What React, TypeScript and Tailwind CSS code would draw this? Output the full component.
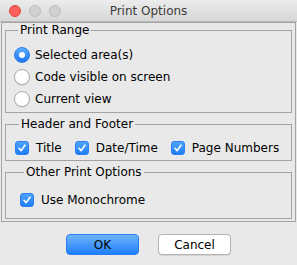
import React from 'react'

const font = { fontFamily: '"DejaVu Sans", "Liberation Sans", sans-serif' }

const Radio = ({ checked, label }: { checked?: boolean; label: string }) => (
  <label className="flex h-[22px] items-center gap-[5px]">
    {checked ? (
      <span className="flex h-[16px] w-[16px] items-center justify-center rounded-full border border-[#2f7fe8] bg-gradient-to-b from-[#5aaefc] to-[#1b74f1]">
        <span className="h-[6px] w-[6px] rounded-full bg-white" />
      </span>
    ) : (
      <span className="h-[16px] w-[16px] rounded-full border border-[#acacac] bg-white shadow-[0_1px_1px_rgba(0,0,0,0.08)]" />
    )}
    <span className="text-[12px] leading-[14px] text-black">{label}</span>
  </label>
)

const Check = ({ label }: { label: string }) => (
  <label className="flex h-[23px] items-center gap-[7px]">
    <span className="flex h-[14px] w-[14px] items-center justify-center rounded-[3px] border border-[#2c7ff0] bg-gradient-to-b from-[#4ea3fc] to-[#1d7cf6]">
      <svg width="10" height="10" viewBox="0 0 10 10" fill="none">
        <path d="M2 5.3 L4.1 7.6 L8 2.2" stroke="white" strokeWidth="1.6" strokeLinecap="round" strokeLinejoin="round" />
      </svg>
    </span>
    <span className="text-[12px] leading-[14px] text-black">{label}</span>
  </label>
)

const Group = ({ title, className, children }: { title: string; className?: string; children: React.ReactNode }) => (
  <fieldset className={`border border-[#a3a3a3] ${className ?? ''}`}>
    <legend className="ml-[4px] px-[2px] text-[12px] leading-[14px] text-black">{title}</legend>
    {children}
  </fieldset>
)

const App = () => {
  return (
    <div className="h-[265px] w-[297px] overflow-hidden bg-[#e9e9e9]" style={font}>
      {/* title bar */}
      <div className="grid h-[22px] grid-cols-[1fr_auto_1fr] items-center border-b border-[#b9b9b9] bg-gradient-to-b from-[#ececec] to-[#d7d7d7]">
        <div className="flex items-center gap-[8px] pl-[9px]">
          <span className="h-[12px] w-[12px] rounded-full border border-[#e0443e] bg-[#fc605c]" />
          <span className="h-[12px] w-[12px] rounded-full border border-[#bdbdbd] bg-[#d1d1d1]" />
          <span className="h-[12px] w-[12px] rounded-full border border-[#bdbdbd] bg-[#d1d1d1]" />
        </div>
        <div className="text-[12px] leading-[14px] text-[#3c3c3c]">Print Options</div>
        <div />
      </div>

      <div className="ml-[1px] w-[295px] border border-[#a3a3a3] px-[3px] pb-[2px]">
        <Group title="Print Range" className="pb-[2px] pl-[8px] pt-[7px]">
          <Radio checked label="Selected area(s)" />
          <Radio label="Code visible on screen" />
          <Radio label="Current view" />
        </Group>

        <Group title="Header and Footer" className="mt-[4px] pb-[1px] pl-[9px] pt-[5px]">
          <div className="flex gap-[13px]">
            <Check label="Title" />
            <Check label="Date/Time" />
            <Check label="Page Numbers" />
          </div>
        </Group>

        <Group title="Other Print Options" className="mt-[4px] pb-[7px] pl-[14px] pt-[9px]">
          <Check label="Use Monochrome" />
        </Group>
      </div>

      <div className="mt-[12px] flex justify-center gap-[19px]">
        <button className="h-[21px] w-[73px] rounded-[4px] border border-[#2a7df0] bg-gradient-to-b from-[#6db5fc] to-[#1c7ef8] text-[12px] leading-[14px] text-black">
          OK
        </button>
        <button className="h-[21px] w-[73px] rounded-[4px] border border-[#b3b3b3] bg-white text-[12px] leading-[14px] text-black shadow-[0_1px_1px_rgba(0,0,0,0.1)]">
          Cancel
        </button>
      </div>
    </div>
  )
}

export default App
